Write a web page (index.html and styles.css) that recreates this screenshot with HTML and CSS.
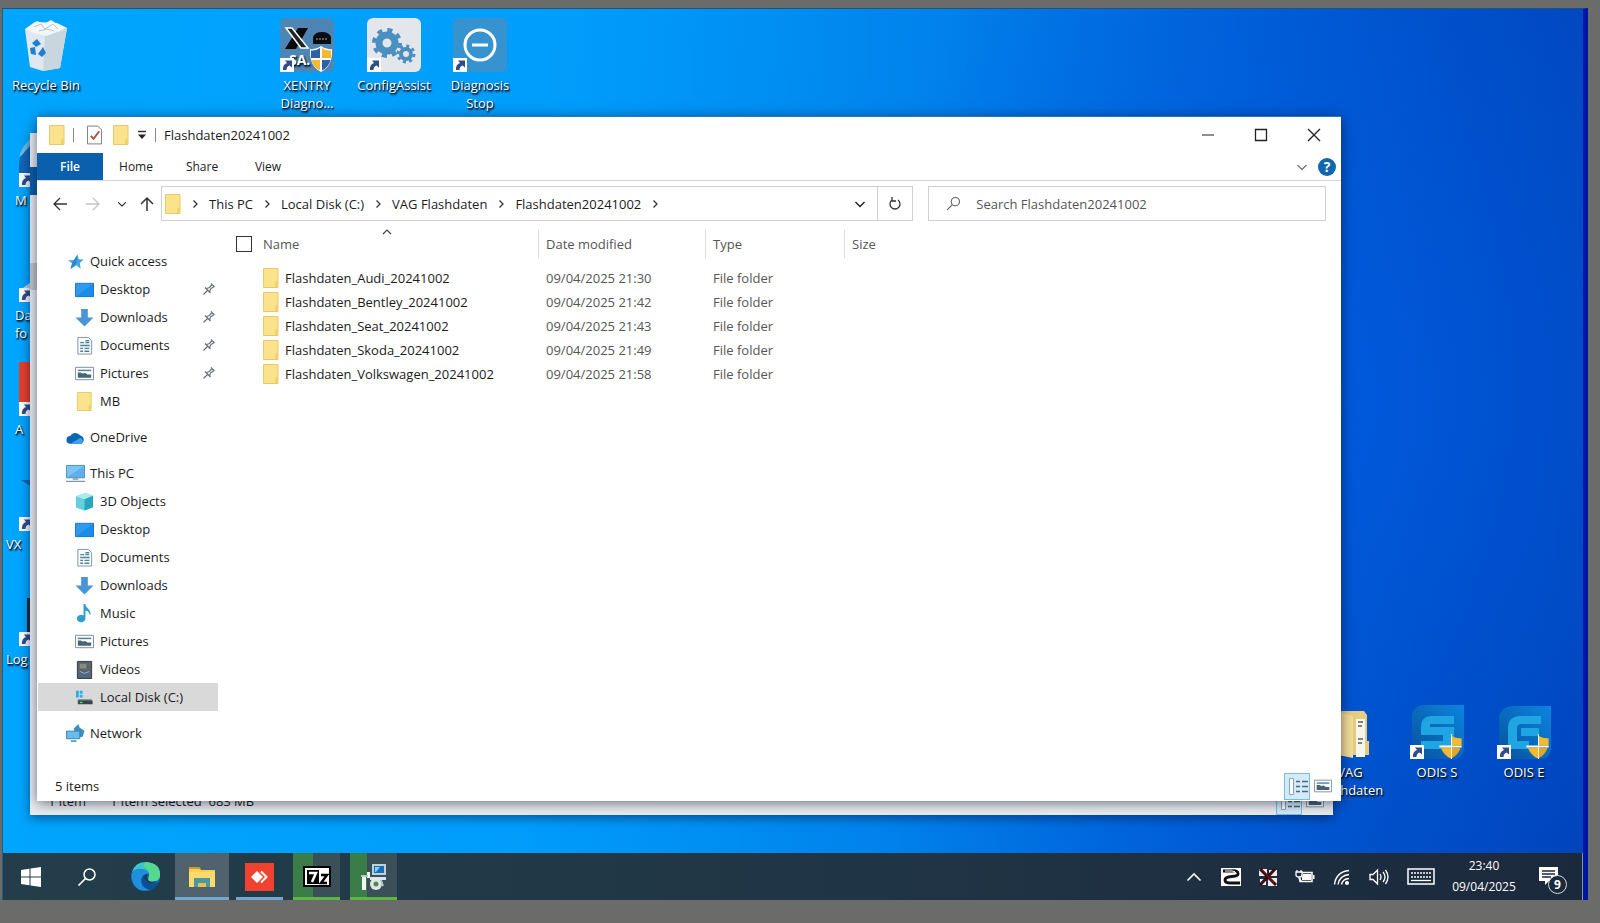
FILE: index.html
```html
<!DOCTYPE html>
<html lang="en">
<head>
    <meta charset="UTF-8">
    <meta name="viewport" content="width=device-width, initial-scale=1.0">
    <title>Flashdaten20241002</title>
    <link rel="stylesheet" href="styles.css">
</head>
<body>
    <!-- shared icons -->
    <svg class="sprite" aria-hidden="true">
        <symbol id="folder" viewBox="0 0 16 20">
            <path d="M.5.5h14.500v19H.5z" fill="#fbe38d" stroke="#e8ca66"/>
            <path d="M12.500 14l2-1v6h-2.500z" fill="#efd164"/>
        </symbol>
        <symbol id="chev" viewBox="0 0 10 10"><path d="M3.500 1.500L7 5 3.500 8.500" fill="none" stroke="#333" stroke-width="1.300"/></symbol>
        <symbol id="down" viewBox="0 0 12 12"><path d="M1.500 4L6 8.500 10.500 4" fill="none" stroke="currentColor" stroke-width="1.300"/></symbol>
        <symbol id="lens" viewBox="0 0 20 20"><circle cx="12.500" cy="7.500" r="5.500" fill="none" stroke="currentColor" stroke-width="1.500"/><path d="M8.500 11.500L1.500 18.500" stroke="currentColor" stroke-width="1.700"/></symbol>
        <symbol id="pin" viewBox="0 0 12 12"><path d="M.5 11.500L4.500 7.500M2 4.500l5.500 5.500M3.500 5.500l3-1 2.500-3M6.500 9l1-3 3.500-2.500M8 .5l3.500 3.500" fill="none" stroke="#66717a" stroke-width="1.200"/></symbol>
        <symbol id="star" viewBox="0 0 20 20"><path d="M12 2.500l1.500 5 5 .5-4 3.500 1 6-4.500-3.500-6 4 2-6-5-3 6.500-.5z" fill="#45a5de"/><path d="M12 3l-1.500 10-6 4.500 2-6z" fill="#2b87c8"/></symbol>
        <symbol id="desktop" viewBox="0 0 20 20"><path d="M.5 3.500h19v14H.5z" fill="#1c8cea" stroke="#1670c0"/><path d="M1 17V4h18z" fill="#2f9af0"/></symbol>
        <symbol id="download" viewBox="0 0 20 20"><path d="M6.500 1h7v9h6L10 19.500.5 10h6z" fill="#4a95d6"/></symbol>
        <symbol id="document" viewBox="0 0 20 20"><path d="M3 1.500h11l3.500 3.500v14H3z" fill="#f6fafb" stroke="#82949d"/><path d="M5.500 7h4M11 5h4M11 7h4M5.500 10h10M5.500 13h3M10 13h5M5.500 16h3M10 16h5" stroke="#4d8596" stroke-width="1.500"/></symbol>
        <symbol id="picture" viewBox="0 0 20 20"><path d="M.5 3.500h19v13H.5z" fill="#fafcfd" stroke="#7b8d98"/><path d="M3 6h14v1.500H3z" fill="#4f7f9e"/><path d="M3 9h3l2 1 3-.5 2 1.500h4v3.500H3z" fill="#466579"/></symbol>
        <symbol id="cloud" viewBox="0 0 20 20"><path d="M4.500 16.500a4 4 0 0 1 0-8 6 6 0 0 1 10.500-.5 4.500 4.500 0 0 1 1 8.500z" fill="#0d66b5"/><path d="M4.500 16.500L15 10.500a3.500 3.500 0 0 1 1.500 6z" fill="#35a6ea"/></symbol>
        <symbol id="pc" viewBox="0 0 20 20"><path d="M.5 1.500h19v13H.5z" fill="#5fb0e8" stroke="#4c8fbd"/><path d="M1 14V2h18z" fill="#7cc4f3"/><path d="M7 15h6v1.500H7zM0 17.500h20v1.500H0z" fill="#7f99a8"/></symbol>
        <symbol id="cube" viewBox="0 0 20 20"><path d="M1 4.500L11 1l8 3v12l-9 3.500-9-3z" fill="#66cfdd"/><path d="M1 4.500l9 3 9-3.500L11 1z" fill="#a9ebf1"/><path d="M10 7.500l9-3.500v12l-9 3.500z" fill="#2ba5bd"/></symbol>
        <symbol id="music" viewBox="0 0 20 20"><path d="M9 0h2c0 5 7 5 5 12-1-4-3-5-5-5v8.500a4.500 4 0 1 1-2-3.500z" fill="#2d9dd4"/></symbol>
        <symbol id="video" viewBox="0 0 20 20"><path d="M2.500 1.500h15v18h-15z" fill="#5b636b" stroke="#33393f"/><path d="M5 4h7v5H5z" fill="#8b8b7c"/><path d="M5 12h10v5H5z" fill="#4d6b86"/><path d="M5 12l5 2 5-2" stroke="#a3abb1" fill="none"/></symbol>
        <symbol id="disk" viewBox="0 0 20 20"><path d="M1 3h3v7H1zM5 3h3v3H5zM5 7h3v3H5z" fill="#29b0e8"/><path d="M3 12h14l1.500 1.500v3.500H3z" fill="#38464c"/><path d="M3 12h15v1H3z" fill="#8fa1a8"/><path d="M5 14.500h3v1.500H5z" fill="#63d06e"/></symbol>
        <symbol id="network" viewBox="0 0 20 20"><path d="M8 5l5-5 1.500 4 5 3-2 6.500-6 1z" fill="#3b8ec4"/><path d="M.5 7.500h14v8H.5z" fill="#69bbeb" stroke="#3c83b3"/><path d="M5 17h6v2H5z" fill="#67a0c4"/></symbol>
        <symbol id="details" viewBox="0 0 26 27"><path d="M5.500 5.500h4v16h-4z" fill="#fff" stroke="#84a5b8"/><path d="M12 8.500h4M18 8.500h6M12 13.500h4M18 13.500h6M12 18.500h4M18 18.500h6" stroke="#4b6878" stroke-width="1.500"/></symbol>
        <symbol id="arrow" viewBox="0 0 14 14"><path d="M0 0h14v14H0z" fill="#fff"/><path d="M5 2.500h7v7L9.500 7.500Q6.500 8.500 6.500 12H3Q2.500 6.500 7 5z" fill="#2f4f8c"/></symbol>
        <symbol id="shield" viewBox="0 0 24 28"><path d="M12 1Q17 5 23 4q1 17-11 23Q0 21 1 4 7 5 12 1z" fill="#fff"/><path d="M11 3v10H2V5.500Q7 6 11 3zM13 15h8.500Q20 22 13 25.500z" fill="#2c62a5"/><path d="M13 3q4 3 9 2.500V13h-9zM2.500 15H11v10.500Q4 22 2.500 15z" fill="#f3b931"/></symbol>
        <symbol id="goldshield" viewBox="0 0 24 28"><path d="M12 1h1v12h10v2H13v12h-1V15H0v-2h12z" fill="#fff"/><path d="M13 3q4 3 10 2.500V13H13zM1.500 15H12v11.500Q4 23 1.500 15z" fill="#f3b931"/><path d="M13 15h9Q20 22 13 26z" fill="#e2a62b"/></symbol>
    </svg>

    <div class="screen">
        <main class="desktop">
            <!-- desktop icons -->
            <a href="#" class="icon col1 row1">
                <svg viewBox="0 0 54 54"><path d="M6 11l42-1-7 40-17 3-13-4z" fill="#dfe8ee"/><path d="M6 11l20 5 22-6-10-5-22-1z" fill="#f8fbfc"/><path d="M26 16l22-6-7 40-17 3z" fill="#cad6de"/><path d="M10 9l8-6 7 3 7-4 9 6 3 4-17 6-15-4z" fill="#f4f7f8"/><path d="M15 9l7-3 4 5 8-5 5 5M20 13l8-2 7 2" fill="none" stroke="#b5c5ce"/><path d="M13 25l5-4 4 5-5 3zM11 30l5-1 1 8-5-1zM19 36l5-7 3 6-4 4z" fill="#1c7fd4"/></svg>
                <span>Recycle Bin</span>
            </a>
            <a href="#" class="icon col1 row2 cut">
                <svg viewBox="0 0 54 54"><path d="M0 30Q2 10 22 0v50H0z" fill="#1368b8"/><path d="M0 24Q5 6 22 0L3 22z" fill="#6dbde8"/><use href="#arrow" y="40" width="14" height="14"/></svg>
                <span>M</span>
            </a>
            <a href="#" class="icon col1 row3 cut">
                <svg viewBox="0 0 54 54"><path d="M4 40l8-6v8z" fill="#c2d6e2"/><use href="#arrow" y="40" width="14" height="14"/></svg>
                <span>Da<br>fo</span>
            </a>
            <a href="#" class="icon col1 row4 cut">
                <svg viewBox="0 0 54 54"><path d="M0 0h54v54H0z" fill="#e8402a"/><use href="#arrow" y="40" width="14" height="14"/></svg>
                <span>A</span>
            </a>
            <a href="#" class="icon col1 row5 cut wide">
                <svg viewBox="0 0 54 54"><path d="M2 3h14v9z" fill="#1765a8"/><use href="#arrow" y="40" width="14" height="14"/></svg>
                <span>VX</span>
            </a>
            <a href="#" class="icon col1 row6 cut wide">
                <svg viewBox="0 0 54 54"><path d="M8 6h20v36H8z" fill="#1d2a3c"/><use href="#arrow" y="40" width="14" height="14"/></svg>
                <span>Log</span>
            </a>
            <a href="#" class="icon col4 row1">
                <svg viewBox="0 0 54 54"><rect width="54" height="54" rx="6" fill="#4d86b4"/><path d="M18 10h10L16 31H5z" fill="#0a0a0a"/><path d="M6 10h6l16 20h-7z" fill="#222" stroke="#fff" stroke-width="1.500"/><path d="M33 26v-7q2-5 9-5t9 5v7z" fill="#0c0d10"/><path d="M36 21h12" stroke="#9aa" stroke-dasharray="2 1"/><text x="9" y="47" class="sa">SA.</text><use href="#arrow" y="40" width="14" height="14"/><use href="#shield" x="29" y="27" width="24" height="28"/></svg>
                <span>XENTRY Diagno...</span>
            </a>
            <a href="#" class="icon col5 row1">
                <svg viewBox="0 0 54 54"><rect width="54" height="54" rx="6" fill="#e3e7ec"/><g fill="none" stroke="#4a8fc0"><circle cx="20" cy="25" r="8" stroke-width="7"/><circle cx="20" cy="25" r="13" stroke-width="4" stroke-dasharray="5 5.200"/><circle cx="39" cy="36" r="5" stroke-width="4"/><circle cx="39" cy="36" r="8" stroke-width="3" stroke-dasharray="3 3.280"/></g><use href="#arrow" y="40" width="14" height="14"/></svg>
                <span>ConfigAssist</span>
            </a>
            <a href="#" class="icon col6 row1">
                <svg viewBox="0 0 54 54"><rect width="54" height="54" rx="5" fill="#3793cf"/><circle cx="27" cy="27" r="15" fill="none" stroke="#fff" stroke-width="3"/><path d="M19 27h16" stroke="#fff" stroke-width="3"/><use href="#arrow" y="40" width="14" height="14"/></svg>
                <span>Diagnosis Stop</span>
            </a>
            <a href="#" class="icon end3">
                <svg viewBox="0 0 54 54"><path d="M10 6h31l3 4v32l2 1v7H10z" fill="#e5cd82"/><path d="M33 14h9v38h-9z" fill="#f7f5ec"/><path d="M35 17h5M35 21h4M35 34h5M35 38h4" stroke="#50626b" stroke-width="1.500"/><path d="M10 6l20 5v42l-20-4z" fill="#f3dd98"/><path d="M43 36h3v14h-3z" fill="#e9cd74"/></svg>
                <span>VAG Flashdaten</span>
            </a>
            <a href="#" class="icon end2">
                <svg viewBox="0 0 54 54"><path d="M12 0h42v44q-1 10-12 10H2V12Q2 2 12 0z" fill="url(#odis)"/><path d="M44 11v8H20v3h24v15q0 7-8 7H11v-8h22v-6H11v-9q1-10 10-10z" fill="#1fa5e2"/><use href="#arrow" y="40" width="14" height="14"/><use href="#goldshield" x="29" y="28" width="24" height="27"/></svg>
                <span>ODIS S</span>
            </a>
            <a href="#" class="icon end1">
                <svg viewBox="0 0 54 54"><defs><linearGradient id="odis" x1="0" y1="1" x2="1" y2="0"><stop offset="0" stop-color="#07529c"/><stop offset="1" stop-color="#0c84de"/></linearGradient></defs><path d="M14 1h40v43q-1 10-12 10H2V13Q3 3 14 1z" fill="url(#odis)"/><path d="M44 11v8H24q-4 0-4 5v12h12v8H11V23q0-11 11-12zM24 23h18v8H24z" fill="#1fa5e2"/><use href="#arrow" y="40" width="14" height="14"/><use href="#goldshield" x="29" y="28" width="24" height="27"/></svg>
                <span>ODIS E</span>
            </a>

            <!-- window behind -->
            <div class="window back">
                <div class="back_tab"></div>
                <div class="back_sel"></div>
                <div class="status">
                    <span>1 item</span>
                    <span>1 item selected&nbsp; 683 MB</span>
                    <div class="views">
                        <svg class="on" viewBox="0 0 26 27"><use href="#details"/></svg>
                        <svg viewBox="0 0 20 20"><use href="#picture"/></svg>
                    </div>
                </div>
            </div>

            <!-- explorer window -->
            <section class="window front">
                <header class="title">
                    <svg class="fold"><use href="#folder"/></svg>
                    <i></i>
                    <svg class="check" viewBox="0 0 16 20"><path d="M.5.5h11l4 4v15H.5z" fill="#fff" stroke="#77797c"/><path d="M4 11l3 3 6-8" fill="none" stroke="#b0503e" stroke-width="2"/></svg>
                    <svg class="fold"><use href="#folder"/></svg>
                    <svg class="drop" viewBox="0 0 10 10"><path d="M1 1.500h8" stroke="#333" stroke-width="1.500"/><path d="M1 4.500h8L5 9z" fill="#222"/></svg>
                    <i></i>
                    <h1>Flashdaten20241002</h1>
                    <div class="ctrl">
                        <button aria-label="Minimize"><svg viewBox="0 0 14 14"><path d="M1 7h12" stroke="#222"/></svg></button>
                        <button aria-label="Maximize"><svg viewBox="0 0 14 14"><path d="M1.500 1.500h11v11h-11z" fill="none" stroke="#222" stroke-width="1.300"/></svg></button>
                        <button aria-label="Close"><svg viewBox="0 0 14 14"><path d="M1 1l12 12M13 1L1 13" stroke="#222" stroke-width="1.400"/></svg></button>
                    </div>
                </header>

                <nav class="tabs">
                    <button class="active">File</button>
                    <button>Home</button>
                    <button>Share</button>
                    <button>View</button>
                    <div class="help">
                        <button aria-label="Expand the ribbon"><svg viewBox="0 0 12 12"><use href="#down"/></svg></button>
                        <button class="q">?</button>
                    </div>
                </nav>

                <div class="address">
                    <div class="arrows">
                        <button aria-label="Back"><svg viewBox="0 0 16 16"><path d="M15 8H2M8 2L2 8l6 6" fill="none" stroke="#333" stroke-width="1.300"/></svg></button>
                        <button aria-label="Forward"><svg viewBox="0 0 16 16"><path d="M1 8h13M8 2l6 6-6 6" fill="none" stroke="#c4c4c4" stroke-width="1.300"/></svg></button>
                        <button aria-label="Recent" class="small"><svg viewBox="0 0 12 12"><use href="#down"/></svg></button>
                        <button aria-label="Up" class="up"><svg viewBox="0 0 16 16"><path d="M8 15V2M2 8l6-6 6 6" fill="none" stroke="#333" stroke-width="1.500"/></svg></button>
                    </div>
                    <div class="path">
                        <svg class="fold"><use href="#folder"/></svg>
                        <svg class="sep"><use href="#chev"/></svg>
                        <a href="#">This PC</a>
                        <svg class="sep"><use href="#chev"/></svg>
                        <a href="#">Local Disk (C:)</a>
                        <svg class="sep"><use href="#chev"/></svg>
                        <a href="#">VAG Flashdaten</a>
                        <svg class="sep"><use href="#chev"/></svg>
                        <a href="#">Flashdaten20241002</a>
                        <svg class="sep"><use href="#chev"/></svg>
                        <button class="more" aria-label="Previous locations"><svg viewBox="0 0 12 12"><use href="#down"/></svg></button>
                        <button class="reload" aria-label="Refresh"><svg viewBox="0 0 14 14"><path d="M4 3a5 5 0 1 0 6 0M4 0v4h4" fill="none" stroke="#333" stroke-width="1.300"/></svg></button>
                    </div>
                    <label class="search">
                        <svg viewBox="0 0 20 20"><use href="#lens"/></svg>
                        <input type="text" placeholder="Search Flashdaten20241002" aria-label="Search Flashdaten20241002">
                    </label>
                </div>

                <div class="content">
                    <nav class="side">
                        <ul>
                            <li class="top"><a href="#"><svg><use href="#star"/></svg>Quick access</a></li>
                            <li><a href="#"><svg><use href="#desktop"/></svg>Desktop<svg class="pin"><use href="#pin"/></svg></a></li>
                            <li><a href="#"><svg><use href="#download"/></svg>Downloads<svg class="pin"><use href="#pin"/></svg></a></li>
                            <li><a href="#"><svg><use href="#document"/></svg>Documents<svg class="pin"><use href="#pin"/></svg></a></li>
                            <li><a href="#"><svg><use href="#picture"/></svg>Pictures<svg class="pin"><use href="#pin"/></svg></a></li>
                            <li><a href="#"><svg><use href="#folder"/></svg>MB</a></li>
                        </ul>
                        <ul>
                            <li class="top"><a href="#"><svg><use href="#cloud"/></svg>OneDrive</a></li>
                        </ul>
                        <ul>
                            <li class="top"><a href="#"><svg><use href="#pc"/></svg>This PC</a></li>
                            <li><a href="#"><svg><use href="#cube"/></svg>3D Objects</a></li>
                            <li><a href="#"><svg><use href="#desktop"/></svg>Desktop</a></li>
                            <li><a href="#"><svg><use href="#document"/></svg>Documents</a></li>
                            <li><a href="#"><svg><use href="#download"/></svg>Downloads</a></li>
                            <li><a href="#"><svg><use href="#music"/></svg>Music</a></li>
                            <li><a href="#"><svg><use href="#picture"/></svg>Pictures</a></li>
                            <li><a href="#"><svg><use href="#video"/></svg>Videos</a></li>
                            <li class="active"><a href="#"><svg><use href="#disk"/></svg>Local Disk (C:)</a></li>
                        </ul>
                        <ul>
                            <li class="top"><a href="#"><svg><use href="#network"/></svg>Network</a></li>
                        </ul>
                    </nav>

                    <div class="files">
                        <table>
                            <thead>
                                <tr>
                                    <th class="c_name"><div><input type="checkbox" aria-label="Select all">Name<svg class="sort" viewBox="0 0 12 12"><path d="M2 8l4-4 4 4" fill="none" stroke="#444" stroke-width="1.200"/></svg></div></th>
                                    <th class="c_date"><div>Date modified</div></th>
                                    <th class="c_type"><div>Type</div></th>
                                    <th><div>Size</div></th>
                                </tr>
                            </thead>
                            <tbody>
                                <tr><td><a href="#"><svg class="fold"><use href="#folder"/></svg>Flashdaten_Audi_20241002</a></td><td>09/04/2025 21:30</td><td>File folder</td><td></td></tr>
                                <tr><td><a href="#"><svg class="fold"><use href="#folder"/></svg>Flashdaten_Bentley_20241002</a></td><td>09/04/2025 21:42</td><td>File folder</td><td></td></tr>
                                <tr><td><a href="#"><svg class="fold"><use href="#folder"/></svg>Flashdaten_Seat_20241002</a></td><td>09/04/2025 21:43</td><td>File folder</td><td></td></tr>
                                <tr><td><a href="#"><svg class="fold"><use href="#folder"/></svg>Flashdaten_Skoda_20241002</a></td><td>09/04/2025 21:49</td><td>File folder</td><td></td></tr>
                                <tr><td><a href="#"><svg class="fold"><use href="#folder"/></svg>Flashdaten_Volkswagen_20241002</a></td><td>09/04/2025 21:58</td><td>File folder</td><td></td></tr>
                            </tbody>
                        </table>
                    </div>
                </div>

                <footer class="status">
                    <span>5 items</span>
                    <div class="views">
                        <button class="on" aria-label="Details"><svg viewBox="0 0 26 27"><use href="#details"/></svg></button>
                        <button aria-label="Large icons"><svg viewBox="0 0 20 20"><use href="#picture"/></svg></button>
                    </div>
                </footer>
            </section>
        </main>

        <footer class="taskbar">
            <div class="apps">
                <button class="start" aria-label="Start"><svg width="20" height="20" viewBox="0 0 20 20"><path d="M0 3l8.500-1.300V9.500H0zM9.500 1.500L20 0v9.500H9.500zM0 10.500h8.500v7.800L0 17zM9.500 10.500H20V20L9.500 18.500z" fill="#fff"/></svg></button>
                <button class="start" aria-label="Search"><svg width="20" height="20"><use href="#lens"/></svg></button>
                <button class="edge" aria-label="Edge"><svg width="29" height="29" viewBox="0 0 28 28"><circle cx="14" cy="14" r="14" fill="#0f6fc6"/><path d="M1 10Q4 0 14 0q14 1 14 12 0 7-8 7-4 0-3-3 2-7-5-9Q5 6 1 10z" fill="#3bc6c9"/><path d="M14 0q14 1 14 12 0 7-8 7-4 0-3-3Q20 9 12 4z" fill="#57d890"/><path d="M1 11Q5 5 12 7q4 1 5 4-7 1-7 7 1 7 9 8Q7 31 2 20 0 15 1 11z" fill="#2090dd"/><path d="M17 11q-4 3-1 7t11 1q-3 7-9 8-9-2-8-10 1-6 7-6z" fill="#0b4f94"/><path d="M17 12q-3 3 0 6 3 2 8 0-3 3-7 2-5-2-5-5 1-3 4-3z" fill="#233641"/></svg></button>
                <button class="app active" aria-label="File Explorer"><svg width="26" height="22" viewBox="0 0 26 22"><path d="M0 1h10l2 3h14v17H0z" fill="#fbcf52"/><path d="M0 1h10l2 2H0z" fill="#d49a24"/><path d="M0 6h26v15H0z" fill="#fddb6b"/><path d="M5 12h16v9h-4v-4H9v4H5z" fill="#4c97a4"/><path d="M9 17h8v4H9z" fill="#e7c04e"/></svg></button>
                <button class="app" aria-label="AnyDesk"><svg width="29" height="28" viewBox="0 0 29 28"><path d="M0 0h29v28H0z" fill="#f0432f"/><path d="M6 14l6-6 6 6-6 6z" fill="#fff"/><path d="M16 8.500l5.500 5.500-5.500 5.500" fill="none" stroke="#fff" stroke-width="2"/></svg></button>
                <button class="app green" aria-label="7-Zip"><svg width="28" height="21" viewBox="0 0 28 21"><path d="M1 1h26v19H1z" fill="#fff" stroke="#000" stroke-width="2"/><path d="M4 4h12v14H4z"/><path d="M6 7h7L9 16" fill="none" stroke="#fff" stroke-width="2.500"/><path d="M18 9h6l-6 8h6" fill="none" stroke="#000" stroke-width="2.500"/></svg></button>
                <button class="app green less" aria-label="Installer"><svg width="26" height="28" viewBox="0 0 26 28"><path d="M11 1h14v11H11z" fill="#bfd0da"/><path d="M13 3h10v7H13z" fill="#1670b8"/><path d="M14 4h5l-4 5h-1z" fill="#7fd3f5"/><path d="M9 14h16v3H9z" fill="#dde5e8"/><path d="M1 13h4v14H1zM6 9h3v6H6z" fill="#f4f4f0"/><circle cx="15" cy="21" r="6" fill="#dfe9df"/><circle cx="15" cy="21" r="2.500" fill="#4c8a67"/><path d="M0 13h7M20 17l2 6" stroke="#b9c4c8" stroke-width="2"/></svg></button>
            </div>
            <div class="tray">
                <button aria-label="Hidden icons"><svg width="16" height="16" viewBox="0 0 16 16"><path d="M1.500 11.500L8 5l6.500 6.500" fill="none" stroke="#fff" stroke-width="1.600"/></svg></button>
                <button aria-label="Cable"><svg width="20" height="20" viewBox="0 0 20 20"><path d="M0 1h20v18H0z" fill="#fff"/><path d="M2 4h9q6-1 6 3 0 2-6 2.500-7 .5-7 3.500t6 3h9" fill="none" stroke="#111" stroke-width="3"/><path d="M4 4h7q4 0 4 3" fill="none" stroke="#fff" stroke-width="1"/></svg></button>
                <button aria-label="Offline"><svg width="20" height="20" viewBox="0 0 20 20"><path d="M1 2h8v7H1zM11 3h8v6h-8zM2 12h6v6H2zM10 11h9v8h-9z" fill="#f1eaea"/><path d="M2 2l16 16M17 2L2 18" stroke="#3b0b0f" stroke-width="3"/><path d="M4 2l12 14" stroke="#8a1d24"/></svg></button>
                <button aria-label="Battery"><svg width="20" height="20" viewBox="0 0 20 20"><path d="M7 5.500h10v9H5v-4" fill="none" stroke="#fff" stroke-width="1.500"/><path d="M8 7h8v6H7v-3zM18 8h1.500v4H18z" fill="#fff"/><path d="M1 5h6v3q0 2-3 2t-3-2zM2 3v2M6 3v2M4 10q0 4 3 4" fill="none" stroke="#fff" stroke-width="1.300"/></svg></button>
                <button aria-label="Wi-Fi"><svg width="18" height="18" viewBox="0 0 18 18"><g fill="none" stroke="#fff" stroke-width="1.400"><path d="M1.500 16.500Q3 4 16 2.500M5 16.500Q6.500 7.500 16 6.500M8.500 16.500Q9.500 11 16 10.500"/></g><circle cx="14" cy="15" r="2" fill="#fff"/></svg></button>
                <button aria-label="Volume"><svg width="20" height="18" viewBox="0 0 20 18"><path d="M1 6.500h3l4.500-4.500v14L4 11.500H1z" fill="none" stroke="#fff" stroke-width="1.300"/><path d="M11 6q2 3 0 6M14 4q4 5 0 10M16.500 2q5 7 0 14" fill="none" stroke="#fff" stroke-width="1.300"/></svg></button>
                <button class="kb" aria-label="Keyboard"><svg width="28" height="18" viewBox="0 0 28 18"><path d="M1 1h26v15H1z" fill="none" stroke="#fff" stroke-width="1.500"/><path d="M4 5h20M4 9h20" stroke="#fff" stroke-width="1.500" stroke-dasharray="2 1"/><path d="M4 12.500h20" stroke="#fff" stroke-width="1.300"/></svg></button>
                <div class="clock"><span>23:40</span><span>09/04/2025</span></div>
                <button class="note" aria-label="Notifications"><svg width="20" height="19" viewBox="0 0 20 19"><path d="M0 0h19v14h-9l-4 4v-4H0z" fill="#fff"/><path d="M3 4h13M3 7h13M3 10h9" stroke="#1c2c3d" stroke-width="1.300"/></svg><b>9</b></button>
            </div>
        </footer>
    </div>
</body>
</html>
```
FILE: styles.css
```css
*{
    padding: 0;
    margin: 0;
    box-sizing: border-box;
}
ul{
    list-style: none;
}
a,
a:hover{
    color: inherit;
    text-decoration: none;
}
button{
    border: 0;
    background: none;
    font: inherit;
    color: inherit;
    display: flex;
    align-items: center;
    justify-content: center;
}
svg{
    display: block;
    flex: none;
}
body{
    min-height: 100vh;
    display: flex;
    padding: 8px 12px 23px 2px;
    background: #6b6b69;
    font: 13px/18px "Open Sans", "Noto Sans", sans-serif;
    color: #1b1b1b;
}
.sprite{
    position: absolute;
    width: 0;
    height: 0;
}
.screen{
    flex: 1;
    display: flex;
    flex-direction: column;
    border-top: 1px solid #17567f;
    border-left: 1px solid #1d5f86;
    border-right: 5px solid #0016a8;
    background: radial-gradient(ellipse 500px 600px at 84% 44%, rgba(0, 96, 232, .6), rgba(0, 96, 232, 0)), linear-gradient(94deg, #00a6fd 0%, #009dfb 35%, #0082ec 57%, #005fd6 75%, #004cc4 88%, #0042b9 100%);
}
.desktop{
    flex: 1;
    position: relative;
    min-height: 840px;
}

/* desktop icons */
.icon{
    position: absolute;
    width: 86px;
    height: 95px;
    display: flex;
    flex-direction: column;
    align-items: center;
    gap: 4px;
    color: #fff;
    text-align: center;
    text-shadow: 1px 1px 1px #001a33, 1px 2px 2px #001a33;
}
.icon svg{
    width: 54px;
    height: 54px;
}
.icon .sa{
    font: bold 14px "Open Sans", sans-serif;
    fill: #fff;
}
.icon.cut span{
    align-self: flex-start;
    padding-left: 12px;
    text-align: left;
}
.icon.wide span{
    padding-left: 3px;
}
.col1{ left: 0; }
.col4{ left: 261px; }
.col5{ left: 348px; }
.col6{ left: 434px; }
.row1{ top: 9px; }
.row2{ top: 124px; }
.row3{ top: 239px; }
.row4{ top: 353px; }
.row5{ top: 468px; }
.row6{ top: 583px; }
.end1{ right: 16px; bottom: 53px; }
.end2{ right: 103px; bottom: 53px; }
.end3{ right: 190px; bottom: 53px; }

/* windows */
.window{
    position: absolute;
    display: flex;
    flex-direction: column;
    background: #fff;
}
.back{
    left: 27px;
    right: 250px;
    top: 124px;
    bottom: 38px;
    background: #e9ecef;
    box-shadow: 0 3px 10px rgba(0, 20, 60, .5);
}
.back_tab{
    height: 28px;
    margin-top: 34px;
    background: #0b5fa8;
}
.back_sel{
    height: 27px;
    margin-top: 68px;
    background: #c3c9cc;
}
.front{
    left: 34px;
    right: 242px;
    top: 107px;
    bottom: 52px;
    border-top: 1px solid #2a78b0;
    box-shadow: 0 2px 12px rgba(0, 10, 40, .55);
}
.fold{
    width: 16px;
    height: 20px;
}
.title{
    height: 36px;
    display: flex;
    align-items: center;
    gap: 8px;
    padding-left: 12px;
}
.title i{
    width: 1px;
    height: 14px;
    background: #888;
}
.title .check{
    width: 15px;
    height: 20px;
    margin-left: 5px;
}
.title .drop{
    width: 10px;
    height: 10px;
}
.title h1{
    font-size: 13px;
    font-weight: 400;
}
.title .check + .fold{
    margin-left: 3px;
}
.ctrl{
    display: flex;
    margin-left: auto;
    padding-right: 1px;
}
.ctrl button{
    width: 53px;
    height: 34px;
}
.ctrl svg{
    width: 14px;
    height: 14px;
}
.tabs{
    height: 28px;
    display: flex;
    border-bottom: 1px solid #d4d4d4;
    font-size: 12px;
}
.tabs > button{
    width: 66px;
}
.tabs > .active{
    background: #0a60ad;
    color: #fff;
    font-weight: 600;
}
.help{
    display: flex;
    align-items: center;
    gap: 10px;
    margin-left: auto;
    padding-right: 5px;
}
.help svg{
    width: 12px;
    height: 12px;
    color: #777;
}
.help .q{
    width: 18px;
    height: 18px;
    border-radius: 50%;
    background: #0f68ad;
    color: #fff;
    font-size: 14px;
    font-weight: 700;
}
.address{
    display: flex;
    padding: 5px 15px 0 6px;
}
.arrows{
    width: 118px;
    display: flex;
    align-items: center;
}
.arrows button{
    width: 33px;
    height: 35px;
}
.arrows .small,
.arrows .up{
    width: 25px;
}
.arrows svg{
    width: 16px;
    height: 16px;
}
.arrows .small svg{
    width: 10px;
    height: 10px;
}
.path{
    flex: 1;
    height: 35px;
    display: flex;
    align-items: center;
    padding-left: 3px;
    border: 1px solid #d0d0d0;
    white-space: nowrap;
}
.sep{
    width: 10px;
    height: 10px;
    margin: 0 9px;
}
.path button{
    width: 35px;
    height: 33px;
}
.path .more{
    margin-left: auto;
}
.path .reload{
    border-left: 1px solid #d0d0d0;
}
.path .more svg{
    width: 12px;
    height: 12px;
}
.path .reload svg{
    width: 14px;
    height: 14px;
}
.search{
    width: 31%;
    height: 35px;
    display: flex;
    align-items: center;
    gap: 15px;
    margin-left: 15px;
    padding-left: 17px;
    border: 1px solid #d0d0d0;
}
.search svg{
    width: 15px;
    height: 15px;
    color: #666;
}
.search input{
    flex: 1;
    border: 0;
    outline: 0;
    font: inherit;
}
.search input::placeholder{
    color: #555;
    opacity: 1;
}
.content{
    flex: 1;
    display: flex;
}

/* left tree */
.side{
    width: 181px;
    padding: 26px 0 0 1px;
}
.side ul{
    margin-bottom: 8px;
}
.side a{
    height: 28px;
    display: flex;
    align-items: center;
    gap: 6px;
    padding-left: 37px;
}
.side .top a{
    gap: 5px;
    padding-left: 28px;
}
.side svg{
    width: 19px;
    height: 19px;
}
.side .pin{
    width: 12px;
    height: 12px;
    margin: 0 3px 0 auto;
}
.side .active{
    background: #d9d9d9;
}

/* file list */
.files{
    flex: 1;
    padding: 9px 0 0 18px;
}
.files table{
    width: 100%;
    table-layout: fixed;
    border-collapse: collapse;
    text-align: left;
}
.files th{
    padding-bottom: 8px;
    font-weight: 400;
    color: #555;
}
.files th div{
    height: 28px;
    display: flex;
    align-items: center;
    padding-left: 7px;
    border-left: 1px solid #dcdcdc;
}
.files .c_name{
    width: 302px;
}
.files .c_date{
    width: 167px;
}
.files .c_type{
    width: 139px;
}
.files .c_name div{
    position: relative;
    padding: 0;
    border: 0;
}
.files input{
    appearance: none;
    width: 16px;
    height: 16px;
    margin-right: 11px;
    border: 1px solid #333;
    background: #fff;
}
.sort{
    position: absolute;
    left: 48%;
    top: -4px;
    width: 12px;
    height: 12px;
}
.files td{
    height: 24px;
    padding-left: 8px;
    color: #555;
}
.files td:first-child{
    padding-left: 27px;
    color: #1b1b1b;
}
.files td a{
    display: flex;
    align-items: center;
    gap: 6px;
}

/* status bar */
.status{
    height: 30px;
    display: flex;
    align-items: center;
    gap: 24px;
    padding: 0 9px 0 18px;
}
.back .status{
    height: 28px;
    margin-top: auto;
}
.views{
    display: flex;
    align-items: center;
    gap: 4px;
    margin-left: auto;
}
.views svg{
    width: 18px;
    height: 18px;
}
.views .on,
.views .on svg{
    width: 26px;
    height: 27px;
}
.views .on{
    background: #d3ebf7;
    outline: 1px solid #7dbcdb;
    outline-offset: -1px;
}

/* taskbar */
.taskbar{
    height: 47px;
    display: flex;
    justify-content: space-between;
    background: linear-gradient(90deg, #233d4a, #203646 50%, #1b293c);
    color: #fff;
}
.apps,
.tray{
    display: flex;
}
.apps button,
.tray button{
    height: 47px;
}
.apps .start{
    width: 56px;
}
.apps .edge{
    width: 60px;
}
.apps .app{
    width: 47px;
    margin-right: 10px;
    border-bottom: 3px solid #77a5d0;
    padding-top: 3px;
}
.apps .active{
    width: 54px;
    margin-right: 7px;
    background: #50626d;
}
.apps .green{
    border-color: #5db544;
    background: linear-gradient(90deg, #3a7d48 20px, #3b4f59 20px);
}
.apps .less{
    background: linear-gradient(90deg, #3a7d48 17px, #3b4f59 17px);
}
.tray{
    border-right: 1px solid #8794a0;
}
.tray button{
    width: 37px;
}
.tray .kb{
    width: 47px;
}
.clock{
    width: 80px;
    display: flex;
    flex-direction: column;
    justify-content: center;
    align-items: center;
    gap: 3px;
    font-size: 12px;
}
.tray .note{
    width: 58px;
    position: relative;
    padding-right: 8px;
}
.note b{
    position: absolute;
    left: 24px;
    top: 22px;
    width: 19px;
    height: 19px;
    border: 1px solid #d5dade;
    border-radius: 50%;
    background: #1c2a3b;
    font-size: 12px;
    line-height: 17px;
}
```
